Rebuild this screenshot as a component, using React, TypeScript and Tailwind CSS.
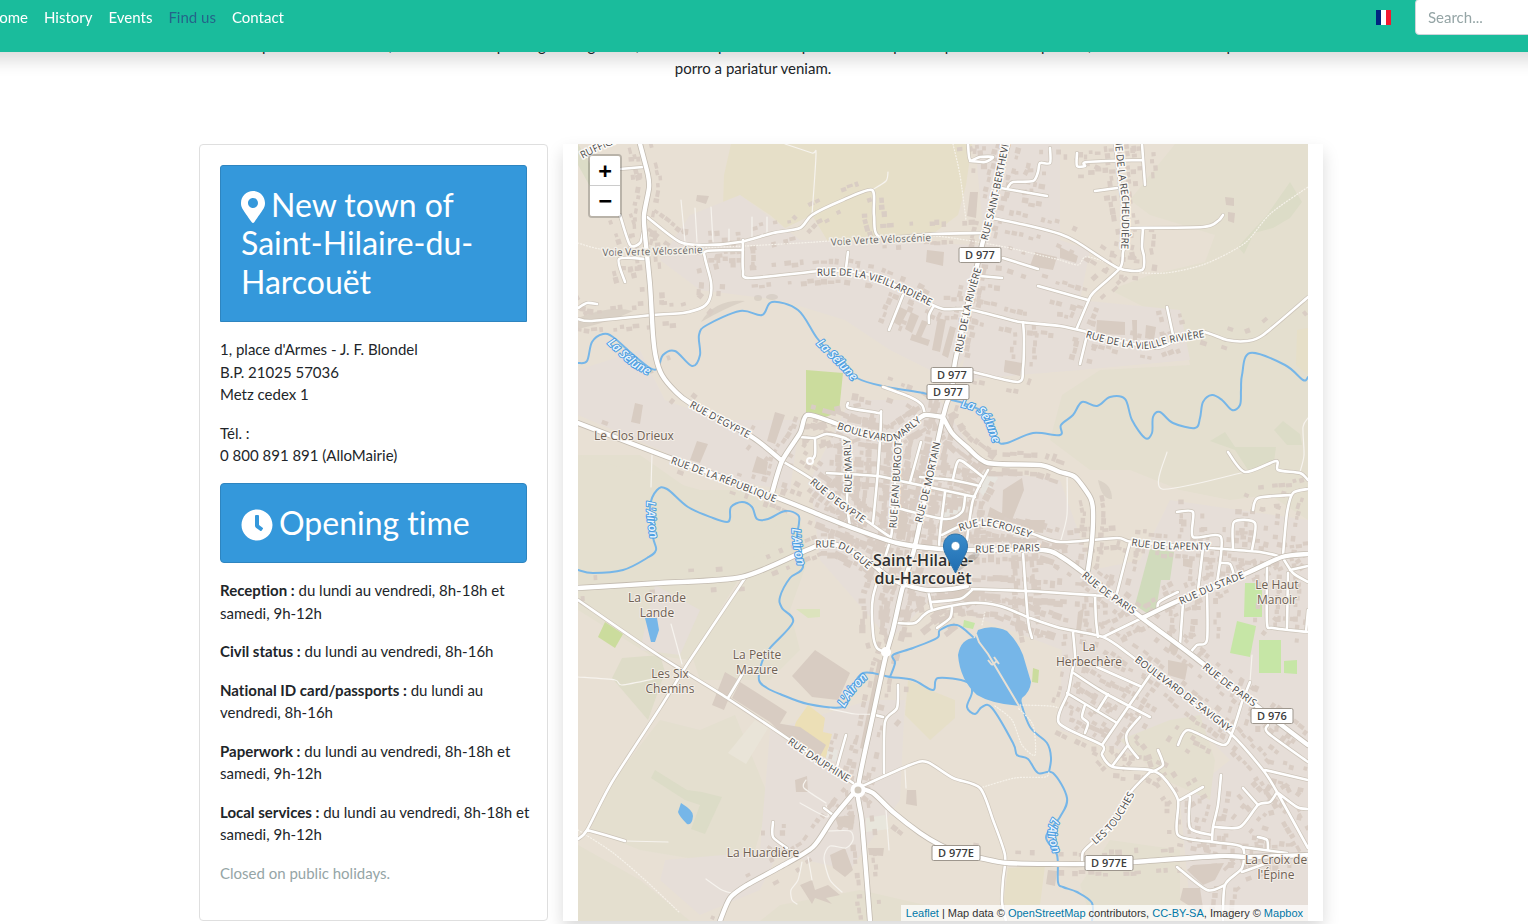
import React from "react";
import { FaClock, FaMapMarkerAlt } from "react-icons/fa";

type Kind = "major" | "minor" | "rural" | "thin" | "path";

const roads: [Kind, string][] = [
  // footpaths
  ["path", "578,243 600,249 640,252 700,248 745,246 800,243 830,241 880,238 935,236 1000,246 1060,260"],
  ["path", "1060,260 1078,265 1085,257 1100,260 1125,271 1165,273 1205,264 1245,243 1270,214 1308,187"],
  ["path", "953,144 960,175 966,220"],
  ["path", "578,830 612,852 645,880 680,913"],
  ["path", "1020,705 1050,706 1062,709"],
  ["path", "995,706 1012,720 1022,745 1035,755 1033,725 1018,708"],
  ["path", "980,788 1015,778 1045,777 1049,772"],
  ["path", "985,612 982,625"],
  // service roads
  ["thin", "681,200 685,242"],
  ["thin", "695,208 697,242"],
  ["thin", "711,207 713,242"],
  ["thin", "752,217 752,238"],
  ["thin", "767,217 767,233"],
  ["thin", "729,229 729,241"],
  ["thin", "785,144 812,153 816,154 812,215"],
  ["thin", "872,190 886,181 888,172"],
  ["thin", "652,455 651,487"],
  ["thin", "1167,452 1162,489 1245,472"],
  ["thin", "1308,418 1303,427 1304,455 1300,472"],
  ["thin", "1067,472 1067,515 1061,540"],
  ["thin", "625,841 668,842"],
  ["thin", "578,677 615,680 622,685 658,678"],
  ["thin", "671,624 682,664"],
  ["thin", "800,803 827,817 826,805"],
  ["thin", "830,709 855,714 878,714"],
  ["thin", "806,780 804,788 826,803"],
  ["thin", "828,831 850,831 853,840 846,848 830,846 824,858 830,880 842,892"],
  ["thin", "808,857 812,880"],
  ["thin", "802,862 798,880 791,890 792,900 797,904"],
  ["thin", "706,879 722,890 735,894"],
  ["thin", "886,810 889,850"],
  ["thin", "905,770 906,788"],
  ["thin", "1252,655 1250,682"],
  // rural
  ["rural", "578,600 658,655 727,698 790,740 853,783"],
  ["rural", "745,578 690,660 660,708 612,782 587,830 578,839"],
  ["rural", "587,830 605,835 625,841"],
  ["rural", "743,673 728,698"],
  ["rural", "858,788 910,765 927,762 953,778 980,788 993,820 1005,855 1003,880 1002,902 1006,921"],
  ["rural", "1130,228 1203,227 1218,221 1223,215"],
  ["rural", "1228,452 1245,472 1276,461 1278,470 1300,473 1308,480"],
  ["rural", "1150,772 1130,793 1117,822 1093,842 1083,852 1082,863"],
  ["rural", "1225,885 1207,890 1177,867"],
  // streets
  ["minor", "647,217 680,242 707,245 740,242 773,233 800,228 812,215 843,200 872,190 874,215 880,237 933,234 982,233"],
  ["minor", "743,240 743,270 750,278 820,271 845,271 870,275 900,287 927,302 943,309 967,309 1000,317 1020,322 1060,326 1087,332 1120,341 1157,348 1180,338 1203,332 1227,340 1247,341 1263,335 1308,297"],
  ["minor", "743,250 707,251 705,258 711,282 710,298 703,307 683,313 653,315 592,321 578,319"],
  ["minor", "643,167 620,169"],
  ["minor", "620,215 630,245 640,243 643,232"],
  ["minor", "625,282 619,259 645,259"],
  ["minor", "578,308 587,303 597,304"],
  ["minor", "992,218 1030,226 1060,234 1077,242 1118,268 1142,270 1144,257 1142,247 1143,228"],
  ["minor", "1115,144 1120,185 1127,235 1123,252 1120,268 1093,293 1088,302 1077,328"],
  ["minor", "1038,286 1088,300"],
  ["minor", "1142,144 1145,185"],
  ["minor", "1077,153 1077,166 1085,166 1087,162 1142,160"],
  ["minor", "1095,191 1117,188"],
  ["minor", "1087,335 1080,364"],
  ["minor", "1167,307 1173,335"],
  ["minor", "995,187 1047,196"],
  ["minor", "1008,187 1013,182 1033,181 1038,172 1040,163 1050,163 1050,148"],
  ["minor", "968,144 970,160 980,157 993,157 985,162 970,161"],
  ["minor", "1003,258 1038,269"],
  ["minor", "980,276 1002,278"],
  ["minor", "973,372 1018,382 1023,368 1024,338 1023,322"],
  ["minor", "903,295 889,330"],
  ["minor", "933,307 929,315 929,323"],
  ["minor", "848,252 846,268"],
  ["minor", "848,403 849,408 878,413 881,415 878,470 873,523"],
  ["minor", "883,387 910,397 922,405 925,415"],
  ["minor", "800,437 815,438 827,434 847,439 850,448 847,500 850,527"],
  ["minor", "815,438 815,455 810,462"],
  ["minor", "782,461 813,480 863,518 890,537"],
  ["minor", "827,473 877,476 910,483 975,497"],
  ["minor", "900,440 893,503 891,537 873,597 873,633 877,648 886,652"],
  ["minor", "921,442 910,482"],
  ["minor", "920,477 952,480 980,486"],
  ["minor", "953,479 957,463 962,461 983,477"],
  ["minor", "988,470 973,500 967,540"],
  ["minor", "945,492 940,533 939,548"],
  ["minor", "897,508 945,519 962,512 965,497"],
  ["minor", "942,535 963,525 987,523 1030,533 1060,542 1117,538 1133,542 1210,548 1260,552 1282,557"],
  ["minor", "972,589 1027,591 1060,593 1105,596"],
  ["minor", "897,623 915,623 930,611 970,603 1000,606 1030,618 1060,628 1103,637 1130,655 1180,694 1230,733 1263,770 1277,792 1308,848"],
  ["minor", "928,590 932,610"],
  ["minor", "932,602 960,599 972,590"],
  ["minor", "1023,553 1028,620 1032,638"],
  ["minor", "952,608 950,618 937,628"],
  ["minor", "1103,637 1142,618"],
  ["minor", "1130,542 1117,593"],
  ["minor", "1177,512 1193,512 1193,537 1221,537 1217,583"],
  ["minor", "1203,548 1198,590"],
  ["minor", "1233,548 1234,522 1255,523 1252,550"],
  ["minor", "1308,489 1293,493 1287,513 1283,555"],
  ["minor", "1253,510 1258,498 1290,495"],
  ["minor", "1220,563 1230,564 1234,575"],
  ["minor", "1267,567 1267,623 1273,628 1308,632"],
  ["minor", "1288,573 1287,628"],
  ["minor", "1283,558 1293,573 1308,582"],
  ["minor", "1290,570 1308,566"],
  ["minor", "1306,632 1308,610"],
  ["minor", "1158,610 1159,602 1178,592"],
  ["minor", "1183,603 1180,645"],
  ["minor", "1207,590 1207,640 1197,645 1190,653"],
  ["minor", "1095,595 1096,620 1098,637"],
  ["minor", "1073,632 1075,657 1072,672 1068,693 1059,723 1102,745 1102,755 1113,767 1150,770 1163,777 1178,800 1178,835 1213,842 1242,847 1242,868 1225,885 1223,921"],
  ["minor", "1242,702 1232,733 1223,745 1188,730 1178,745"],
  ["minor", "1250,682 1242,702"],
  ["minor", "1102,745 1150,675"],
  ["minor", "1072,672 1103,692 1150,717"],
  ["minor", "1097,667 1142,687"],
  ["minor", "1067,693 1117,723"],
  ["minor", "1098,710 1108,694"],
  ["minor", "1140,717 1127,733 1128,745 1138,758"],
  ["minor", "1113,765 1128,745"],
  ["minor", "1085,705 1082,717 1088,723 1085,733"],
  ["minor", "1158,750 1163,765 1152,772"],
  ["minor", "1203,787 1180,800"],
  ["minor", "1190,797 1190,828 1212,835"],
  ["minor", "1221,775 1218,805 1213,827 1212,842"],
  ["minor", "1215,827 1240,827 1258,805 1270,802 1277,792"],
  ["minor", "1258,805 1243,788"],
  ["minor", "1265,770 1308,780"],
  ["minor", "1277,792 1297,807 1308,809"],
  ["minor", "1268,725 1268,733 1308,762"],
  ["minor", "1242,847 1287,853"],
  ["minor", "1258,837 1267,840 1268,850"],
  ["minor", "1242,872 1270,862"],
  ["minor", "898,685 897,708 885,722 884,773"],
  ["minor", "875,715 883,717"],
  ["minor", "846,735 837,767"],
  ["minor", "773,822 773,837 787,848"],
  ["minor", "824,808 833,815"],
  // main roads
  ["major", "578,588 660,583 742,577 807,550 820,545 837,545 867,560 883,573 900,583 927,590 950,589 967,586"],
  ["major", "772,493 782,461 800,433 807,415 832,422 860,433 890,438 913,423 925,415 942,417"],
  ["major", "1142,618 1180,600 1247,573 1282,557 1308,554"],
  ["major", "943,417 952,433 967,447 988,463 1040,465 1060,472 1075,477 1090,497 1093,510 1092,540 1088,570"],
  ["major", "640,144 648,175 649,188 644,215 645,235 650,285 653,335 656,358 662,375 675,391 690,403 752,437 782,461"],
  ["major", "578,423 667,457 778,498 820,515 850,527 897,543 940,549 973,550 1043,550 1060,556 1080,570 1142,618 1193,656 1258,707 1308,745"],
  ["major", "1008,144 997,188 982,245 967,308 955,362 952,388 943,417 917,537 912,557 902,590 893,630 886,655 873,715 858,788 862,822 870,921"],
  ["major", "858,788 873,793 893,812 920,833 940,845 963,855 980,858 1007,863 1057,864 1087,864 1133,862 1220,856 1250,857 1308,855"],
  ["major", "858,788 833,818 813,847 780,867 747,885 730,898 720,921"],
];

const rivers = [
  "578,363 587,361 592,342 603,334 613,337 630,352 650,368 658,368 663,355 675,351 692,366 700,355 699,335 707,325 740,311 762,315 772,302 798,310 817,338 835,358 857,378 887,387 923,393 940,398 963,403 987,415 997,440 1007,443 1033,433 1060,435 1061,425 1073,415 1082,402 1097,406 1110,397 1125,399 1132,420 1145,438 1152,433 1153,417 1160,412 1173,423 1195,428 1200,418 1203,402 1212,395 1222,400 1232,410 1240,405 1241,390 1242,375 1250,353 1285,365 1303,380 1308,377",
  "578,570 593,573 623,570 647,558 656,550 653,537 650,507 657,490 667,489 688,507 713,518 727,522 730,518 731,507 742,502 752,507 757,519 768,519 785,511 798,515 799,523 797,540 803,567 790,578 780,597 782,608 793,622 770,648 762,662 759,680 767,688 780,694 808,704 843,707 850,693 863,673 890,677 913,680 933,690 938,678 967,682 972,692 967,707 975,714 982,707 992,708 1013,743 1017,755 1028,759 1038,773 1053,773 1067,798 1060,817 1046,837 1057,855 1058,882 1063,887 1077,892 1092,903 1092,921",
  "1020,700 1030,727 1047,743 1051,758 1049,772",
  "890,677 895,663 893,655 913,648 937,638 940,630 957,625 973,637",
];

const parse = (s: string): number[][] =>
  s
    .split(" ")
    .filter((p) => p.includes(","))
    .map((p) => p.split(",").map(Number));

// Rounds the corners of a polyline with a gentle Catmull-Rom curve.
function curve(s: string, t = 0.13): string {
  const p = parse(s);
  let d = `M${p[0][0]},${p[0][1]}`;
  for (let i = 0; i < p.length - 1; i++) {
    const a = p[i - 1] || p[i];
    const b = p[i];
    const c = p[i + 1];
    const e = p[i + 2] || c;
    d += `C${b[0] + (c[0] - a[0]) * t},${b[1] + (c[1] - a[1]) * t} ${c[0] - (e[0] - b[0]) * t},${c[1] - (e[1] - b[1]) * t} ${c[0]},${c[1]}`;
  }
  return d;
}

// Small houses lined up on both sides of the streets.
function houses(): string {
  let seed = 11;
  const rnd = () => {
    seed = (seed * 16807) % 2147483647;
    return seed / 2147483647;
  };
  let d = "";
  for (const [kind, line] of roads) {
    if (kind !== "minor" && kind !== "major") continue;
    const pts = parse(line);
    for (let i = 0; i < pts.length - 1; i++) {
      const [x1, y1] = pts[i];
      const [x2, y2] = pts[i + 1];
      const len = Math.hypot(x2 - x1, y2 - y1);
      if (len < 3) continue;
      const ux = (x2 - x1) / len;
      const uy = (y2 - y1) / len;
      for (let s = 4; s < len; s += 7) {
        for (const side of [-1, 1]) {
          const x = x1 + ux * s;
          const y = y1 + uy * s;
          const core = x > 820 && x < 1060 && y > 400 && y < 640;
          const rural =
            (x < 770 && y > 330) ||
            (x > 1175 && y < 480) ||
            (x > 880 && x < 1060 && y > 690) ||
            (x > 985 && x < 1092 && y > 440 && y < 500);
          if (rnd() > (core ? 0.95 : rural ? 0.12 : 0.62)) continue;
          const off = side * (8 + rnd() * 4);
          const cx = x - uy * off;
          const cy = y + ux * off;
          const w = 1.8 + rnd() * (core ? 3 : 1.6);
          const h = 1.6 + rnd() * (core ? 2.4 : 1.2);
          const q = (a: number, b: number) =>
            `${(cx + ux * a - uy * b).toFixed(1)},${(cy + uy * a + ux * b).toFixed(1)}`;
          d += `M${q(-w, -h)}L${q(w, -h)}L${q(w, h)}L${q(-w, h)}Z`;
        }
      }
    }
  }
  return d;
}

const houseShapes = houses();

const areas: [string, string][] = [
  ["#e6dfc8", "731,144 972,144 966,185 958,215 930,236 880,238 860,250 830,245 812,215 785,228 770,215 740,195 723,208 724,175"],
  ["#e4dfcf", "1175,144 1308,144 1308,520 1270,495 1230,500 1180,490 1130,470 1090,470 1050,440 1062,395 1100,370 1190,365 1180,325 1130,300 1110,290 1150,275 1205,262 1215,235 1150,215 1130,200"],
  ["#e4dfcf", "578,455 640,455 690,490 740,490 800,520 808,560 790,610 800,650 770,680 700,680 690,650 745,580 700,500"],
  ["#e4dfcf", "578,455 700,490 780,520 740,577 690,660 650,655 578,610"],
  ["#e4dfcf", "700,730 735,715 770,800 755,850 700,860 640,850 590,830 612,782 660,720"],
  ["#e4dfcf", "578,845 640,880 690,921 578,921"],
  ["#e4dfcf", "780,905 860,890 925,905 930,921 760,921"],
  ["#e4dfcf", "1110,840 1180,850 1180,921 1092,921 1080,885"],
  ["#e6ded8", "578,370 640,350 665,400 720,420 800,420 790,490 720,480 660,450 578,415"],
  ["#e6ded8", "660,260 690,215 740,195 800,240 980,245 1000,300 950,380 890,350 845,320 780,300 700,290"],
  ["#e6ded8", "975,144 1060,144 1060,240 1090,250 1080,300 1180,310 1190,360 1080,370 960,380 985,250"],
  ["#e6ded8", "850,400 940,400 985,470 1060,480 1092,570 1140,560 1170,500 1308,520 1308,921 1190,905 1180,800 1230,760 1190,720 1150,760 1060,730 1062,650 930,600 890,640 820,560 810,480"],
  ["#e4dfcf", "1170,720 1200,715 1215,760 1210,800 1165,780 1120,740"],
  ["#e6ded8", "770,730 870,700 905,700 900,800 850,870 760,850"],
  ["#e6ded8", "665,860 780,850 760,890 700,915 660,880"],
  ["#e6ded8", "655,585 700,610 680,655 640,650"],
  ["#e6dfc8", "908,680 935,692 955,700 955,718 930,740 905,715"],
  ["#e6dfc8", "1008,868 1045,866 1040,905 1003,905"],
  ["#e6dfc8", "1297,330 1308,328 1308,375 1296,365"],
  ["#dcdcc7", "578,144 594,170 592,190 578,165"],
  ["#dcdcc7", "1238,247 1267,215 1290,182 1302,202 1290,218 1273,228 1254,233 1244,254"],
  ["#dcdcc7", "1210,441 1225,432 1235,447 1276,447 1274,462 1248,470 1235,450"],
  ["#dcdcc7", "1274,430 1283,421 1300,434 1302,445 1287,445"],
  ["#dcdcc7", "655,770 687,790 702,792 722,797 705,834 691,829 700,805 685,800 651,778"],
  ["#dedcc8", "622,658 660,655 665,672 648,720 612,678"],
  ["#d0dbbc", "1150,549 1174,552 1170,580 1161,580 1156,610 1148,614 1135,605"],
  ["#cbdc9d", "806,370 843,373 839,412 820,419 806,413"],
  ["#cbdc9d", "605,622 623,634 615,648 598,637"],
  ["#dce3bd", "796,609 820,609 820,617 808,618"],
  ["#c6e6a6", "1245,583 1262,583 1262,617 1244,617"],
  ["#c6e6a6", "1237,621 1256,626 1250,657 1230,653"],
  ["#c6e6a6", "1259,640 1281,640 1281,673 1259,673"],
  ["#c6e6a6", "1284,661 1297,660 1297,674 1284,673"],
  ["#c6e6a6", "964,620 975,623 973,629 963,627"],
  ["#cbdc9d", "1033,668 1039,670 1038,683 1032,682"],
  ["#ecdfb6", "808,705 825,718 823,732 832,734 826,758 790,740 796,722"],
  ["#e9e4d8", "755,720 768,728 746,764 728,753"],
  ["#e7e5df", "948,495 962,498 961,512 943,518"],
  ["#e7e5df", "986,470 998,478 985,498 980,492"],
  ["#e7e5df", "828,748 838,750 836,762 826,758"],
  ["#e8e6dc", "866,818 885,815 889,829 866,832"],
];

const blocks = [
  "815,650 850,673 838,700 812,697 792,676",
  "740,682 787,712 778,727 732,698",
  "770,722 800,727 826,745 818,760 785,737",
  "725,672 737,679 724,710 712,705",
  "775,412 785,415 775,444 767,441",
  "697,441 708,444 700,463 690,460",
  "757,456 768,462 766,475 752,472",
  "635,403 643,405 640,424 631,422",
  "970,192 978,192 976,218 967,216",
  "927,250 944,252 943,266 926,262",
  "1035,252 1057,257 1053,270 1030,266",
  "1097,320 1125,322 1125,335 1096,334",
  "1132,320 1133,340 1137,340 1137,320",
  "1146,325 1156,327 1154,340 1145,338",
  "1060,247 1078,256 1076,263 1060,258",
  "1005,360 1022,363 1020,376 1004,372",
  "900,307 908,311 900,326 893,322",
  "911,312 919,316 912,333 905,329",
  "922,320 928,322 920,340 915,337",
  "938,318 946,320 940,352 932,350",
  "950,326 956,328 948,358 942,355",
  "912,334 930,340 928,346 910,340",
  "1003,490 1022,478 1024,490 1012,520 1002,515",
  "990,507 1005,515 1000,530 986,522",
  "1020,520 1045,520 1043,533 1022,531",
  "940,520 963,518 960,535 942,533",
  "955,590 980,590 978,602 953,600",
  "900,512 908,514 905,540 896,538",
  "878,660 884,660 866,750 860,748",
  "1168,660 1188,664 1185,680 1168,675",
  "1193,865 1224,863 1215,880 1203,885 1187,870",
  "1183,888 1200,888 1204,915 1180,900",
  "1048,870 1057,871 1055,886 1046,884",
  "800,885 812,880 815,890 828,885 840,895 826,898 832,904 815,898 812,904",
  "830,855 845,848 853,870 845,877 833,868",
  "907,790 916,790 917,806 906,804",
  "795,780 807,776 808,792 796,792",
  "835,817 855,815 853,829 838,826",
  "868,848 884,848 883,856 869,855",
  "1225,197 1234,198 1234,206 1226,205",
  "1228,212 1235,213 1234,223 1228,221",
  "1183,558 1193,560 1192,568 1183,566",
  "697,195 709,196 706,204 696,201",
  "1078,612 1084,608 1081,630 1076,632",
  "1172,640 1180,645 1176,655 1168,650",
];

const streetLabels: [string, string][] = [
  ["RUFFIGNY", "580,160 598,151 628,138"],
  ["RUE SAINT-BERTHEVIN", "985,250 998,198 1012,128"],
  ["RUE DE LA RIVIÈRE", "961,358 971,307 983,264"],
  ["RUE DE LA RECHEUDIÈRE", "1113,126 1119,180 1122,205 1121,256"],
  ["RUE DE LA VIEILLARDIÈRE", "817,276 848,276 874,281 897,290 930,306"],
  ["RUE DE LA VIEILLE RIVIÈRE", "1084,337 1110,344 1145,349 1170,343 1206,337"],
  ["RUE D'EGYPTE", "684,404 713,420 753,441"],
  ["RUE DE LA RÉPUBLIQUE", "664,461 719,481 781,505"],
  ["BOULEVARD MARLY", "826,425 860,436 893,441 912,429 930,414"],
  ["RUE D'EGYPTE", "807,481 834,503 865,525"],
  ["RUE MARLY", "851,496 852,470 850,436"],
  ["RUE JEAN BURGOT", "896,532 899,490 902,438"],
  ["RUE DE MORTAIN", "920,530 930,490 942,436"],
  ["RUE LECROISEY", "957,532 987,526 1033,539"],
  ["RUE DE PARIS", "968,553 1047,551"],
  ["RUE DE LAPENTY", "1128,545 1160,549 1213,550"],
  ["RUE DU GUÉ", "810,548 836,548 853,557 872,573"],
  ["RUE DE PARIS", "1075,571 1104,595 1140,619"],
  ["RUE DU STADE", "1174,608 1212,591 1252,575"],
  ["BOULEVARD DE SAVIGNY", "1130,658 1178,694 1232,735"],
  ["RUE DE PARIS", "1195,662 1227,688 1261,712"],
  ["RUE DAUPHINE", "783,740 816,763 852,785"],
  ["LES TOUCHES", "1092,848 1116,825 1137,790"],
];

const pathLabels: [string, string][] = [
  ["Voie Verte Véloscénie", "598,256 650,255 707,253"],
  ["Voie Verte Véloscénie", "826,246 880,243 936,241"],
];

const riverLabels: [string, string][] = [
  ["La Sélune", "599,336 616,352 633,367 658,380"],
  ["La Sélune", "810,338 828,356 844,372 858,388"],
  ["La Sélune", "954,406 972,410 983,419 989,432 995,450"],
  ["L'Airon", "647,492 647,518 652,548"],
  ["L'Airon", "792,518 793,544 800,576"],
  ["L'Airon", "842,712 853,694 871,674"],
  ["L'Airon", "1057,810 1049,825 1049,840 1056,862"],
];

const placeLabels: [number, number, string[]][] = [
  [634, 440, ["Le Clos Drieux"]],
  [657, 602, ["La Grande", "Lande"]],
  [757, 659, ["La Petite", "Mazure"]],
  [670, 678, ["Les Six", "Chemins"]],
  [763, 857, ["La Huardière"]],
  [1089, 651, ["La", "Herbechère"]],
  [1277, 589, ["Le Haut", "Manoir"]],
  [1276, 864, ["La Croix de", "l'Épine"]],
];

const shields: [number, number, string][] = [
  [980, 255, "D 977"],
  [952, 375, "D 977"],
  [948, 392, "D 977"],
  [1272, 716, "D 976"],
  [956, 853, "D 977E"],
  [1109, 863, "D 977E"],
];

function pick(kinds: Kind[]) {
  return roads
    .filter(([k]) => kinds.includes(k))
    .map(([, p]) => curve(p))
    .join("");
}

function CurvedLabels({
  id,
  items,
  className,
  strokeWidth = 3,
}: {
  id: string;
  items: [string, string][];
  className: string;
  strokeWidth?: number;
}) {
  return (
    <g className={className} strokeWidth={strokeWidth} strokeLinejoin="round" textAnchor="middle">
      {items.map(([text, line], i) => (
        <React.Fragment key={i}>
          <path id={`${id}-${i}`} d={curve(line, 0.16)} fill="none" stroke="none" />
          <text style={{ paintOrder: "stroke" }}>
            <textPath href={`#${id}-${i}`} startOffset="50%">
              {text}
            </textPath>
          </text>
        </React.Fragment>
      ))}
    </g>
  );
}

function TownMap() {
  const local = pick(["minor", "rural"]);
  const major = pick(["major"]);
  return (
    <svg
      viewBox="578 144 730 777"
      className="block h-auto w-full bg-[#e8e0d4] font-['Open_Sans','Noto_Sans',sans-serif]"
      role="img"
      aria-label="Map of Saint-Hilaire-du-Harcouët"
    >
      <defs>
        <linearGradient id="pin" x1="0" y1="0" x2="0" y2="1">
          <stop offset="0" stopColor="#3a8ccb" />
          <stop offset="1" stopColor="#1f6cb0" />
        </linearGradient>
      </defs>
      {areas.map(([fill, points], i) => (
        <polygon key={i} fill={fill} points={points} />
      ))}
      <g fill="#cfc6bb" opacity="0.55">
        <path d="M578,318 Q610,305 633,311 Q610,322 578,329Z" />
        <path d="M701,322 Q715,299 745,301 Q725,308 701,322Z" />
        <ellipse cx="772" cy="297" rx="6" ry="3" />
        <ellipse cx="758" cy="298" rx="4" ry="3" />
        <path d="M1098,480 Q1112,484 1112,499 Q1102,500 1098,480Z" />
      </g>
      <path d={houseShapes} fill="#d9cdc4" />
      <g fill="#d8ccc2">
        {blocks.map((points, i) => (
          <polygon key={i} points={points} />
        ))}
      </g>

      <g fill="none" stroke="#76b6e8" strokeWidth="2" strokeLinecap="round">
        {rivers.map((line, i) => (
          <path key={i} d={curve(line, 0.17)} />
        ))}
      </g>
      <g fill="#76b6e8">
        <path d="M978,630 Q992,624 1007,631 Q1018,642 1023,655 L1031,682 Q1030,692 1022,698 L1020,706 Q992,704 977,695 Q960,680 958,655 Q961,638 975,638Z" />
        <path d="M645,618 L657,618 L659,630 L655,642 L651,642Z" />
        <path d="M681,803 Q694,811 693,816 Q692,826 687,824 Q679,816 678,812Z" />
      </g>
      <path d="M976,634 L979,642 L988,654 L1019,706" fill="none" stroke="#e8e0d4" strokeWidth="2" />
      <path
        d="M992,665 L997,661 M988,660 L992,665 M994,657 L999,664"
        fill="none"
        stroke="#e8e0d4"
        strokeWidth="2"
      />

      <g fill="none" strokeLinecap="round" strokeLinejoin="round">
        <path d={pick(["path"])} stroke="#f6f2ea" strokeWidth="1.2" strokeDasharray="1 2" />
        <path d={pick(["thin"])} stroke="#f6f3ee" strokeWidth="1.2" />
        <path d={local} stroke="#cdc5ba" strokeWidth="4" />
        <path d={local} stroke="#ffffff" strokeWidth="2.6" />
        <path d={major} stroke="#c3bbb0" strokeWidth="6" />
        <path d={major} stroke="#ffffff" strokeWidth="4.4" />
      </g>
      <circle cx="858" cy="790" r="5.5" fill="#d0c8bc" stroke="#ffffff" strokeWidth="4" />
      <circle cx="886" cy="652" r="5" fill="#ffffff" />
      <circle cx="810" cy="461" r="3" fill="#e6ded8" stroke="#ffffff" strokeWidth="2" />

      <CurvedLabels
        id="street"
        items={streetLabels}
        className="fill-[#474747] stroke-[#fbf9f6] text-[10px] font-medium"
      />
      <CurvedLabels
        id="way"
        items={pathLabels}
        className="fill-[#666666] stroke-[#f3efe8] text-[10px]"
      />
      <CurvedLabels
        id="river"
        items={riverLabels}
        className="fill-[#e9f3fb] stroke-[#4a9de2] text-[12px] font-semibold italic"
        strokeWidth={2}
      />

      <g
        className="fill-[#6e6054] stroke-[#f4efe8] text-[12px]"
        strokeWidth="2"
        strokeLinejoin="round"
        textAnchor="middle"
      >
        {placeLabels.map(([x, y, lines]) =>
          lines.map((text, i) => (
            <text key={text} x={x} y={y + i * 15} style={{ paintOrder: "stroke" }}>
              {text}
            </text>
          )),
        )}
      </g>

      <g
        className="fill-[#303030] stroke-[#f4efe8] text-[16px] font-semibold"
        strokeWidth="3"
        strokeLinejoin="round"
        textAnchor="middle"
      >
        <text x="923" y="566" style={{ paintOrder: "stroke" }}>
          Saint-Hilaire-
        </text>
        <text x="923" y="584" style={{ paintOrder: "stroke" }}>
          du-Harcouët
        </text>
      </g>

      <g className="text-[11px] font-semibold" textAnchor="middle">
        {shields.map(([x, y, text], i) => {
          const w = text.length > 5 ? 48 : 42;
          return (
            <g key={i}>
              <rect
                x={x - w / 2}
                y={y - 7.5}
                width={w}
                height="15"
                rx="1.5"
                fill="#ffffff"
                stroke="#9d968d"
              />
              <text x={x} y={y + 4} fill="#3c3c3c">
                {text}
              </text>
            </g>
          );
        })}
      </g>

      <path
        d="M956,573 L975,560 Q983,553 977,552 Q968,553 956,573Z"
        fill="#000000"
        opacity="0.12"
      />
      <path
        d="M955.500,534 C948.500,534 943.500,539.200 943.500,546 C943.500,549.500 944.500,552 946.300,555.500 L955.500,573 L964.700,555.500 C966.500,552 967.500,549.500 967.500,546 C967.500,539.200 962.500,534 955.500,534Z"
        fill="url(#pin)"
        stroke="#2e72a8"
      />
      <circle cx="955.500" cy="546" r="4.500" fill="#ffffff" stroke="#2f78b2" strokeWidth="0.800" />
    </svg>
  );
}

const hours: [string, string][] = [
  ["Reception :", "du lundi au vendredi, 8h-18h et samedi, 9h-12h"],
  ["Civil status :", "du lundi au vendredi, 8h-16h"],
  ["National ID card/passports :", "du lundi au vendredi, 8h-16h"],
  ["Paperwork :", "du lundi au vendredi, 8h-18h et samedi, 9h-12h"],
  ["Local services :", "du lundi au vendredi, 8h-18h et samedi, 9h-12h"],
];

const links = ["Home", "History", "Events", "Find us", "Contact"];

export default function App() {
  return (
    <div className="min-h-screen overflow-x-hidden bg-white font-[Lato,sans-serif] text-[15px] leading-normal text-[#212529] [font-variant-ligatures:no-common-ligatures]">
      <header className="sticky top-0 z-10 -mx-5 flow-root h-[52px] bg-[#1abc9c] shadow-[0_8px_16px_rgba(0,0,0,0.15)]">
        <div className="-mt-[3px] -mr-[7px] flex h-10 items-center justify-between">
          <nav className="flex">
            {links.map((name) => (
              <a
                key={name}
                href="#"
                className={name === "Find us" ? "px-2 text-[#24648a]" : "px-2 text-white"}
              >
                {name}
              </a>
            ))}
          </nav>
          <div className="flex items-center gap-6">
            <a href="#" aria-label="Français" className="flex size-[15px]">
              <span className="flex-1 bg-[#00267f]" />
              <span className="flex-1 bg-white" />
              <span className="flex-1 bg-[#f31830]" />
            </a>
            <input
              type="search"
              aria-label="Search"
              placeholder="Search..."
              className="h-9 w-[140px] rounded border border-[#ced4da] bg-white px-3 outline-none placeholder:text-[#95a5a6]"
            />
          </div>
        </div>
      </header>

      <div className="pr-[22px]">
        <main className="mx-auto -mt-[18px] max-w-[1140px]">
          <p className="px-4 text-center">
            Corporis dolor sit amet, consectetur adipisicing elit fugit nihil, error animi possimus
            culpa dolores aliquam impedit nostrum placeat, ut odio molestias expedita
            <br />
            porro a pariatur veniam.
          </p>

          <div className="mt-[65px] grid grid-cols-[349fr_760fr] gap-[15px] pl-4">
            <section className="min-w-0 rounded border border-[#dfdfdf] p-5 pb-0">
              <h2 className="mb-4 rounded-t-[3px] border border-[#2e85c0] bg-[#3498db] p-5 text-[32px] leading-[1.2] text-white">
                <FaMapMarkerAlt className="-mt-1 mr-1.5 inline h-8 w-6 align-middle" />
                New town of Saint-Hilaire-du-Harcouët
              </h2>
              <p className="mb-4">
                1, place d'Armes - J. F. Blondel
                <br />
                B.P. 21025 57036
                <br />
                Metz cedex 1
              </p>
              <p className="mb-4">
                Tél. :<br />0 800 891 891 (AlloMairie)
              </p>
              <h2 className="mb-4 rounded border border-[#2e85c0] bg-[#3498db] p-5 text-[32px] leading-[1.2] text-white">
                <FaClock className="-mt-1 mr-1.5 inline size-8 align-middle" />
                Opening time
              </h2>
              <div className="-mr-2">
                {hours.map(([name, time]) => (
                  <p key={name} className="mb-4">
                    <strong className="font-bold">{name}</strong> {time}
                  </p>
                ))}
              </div>
              <p className="mb-4 text-[#95a5a6]">Closed on public holidays.</p>
            </section>

            <section className="min-w-0 self-start bg-white px-[15px] shadow-[0_8px_16px_rgba(0,0,0,0.15)]">
              <div className="relative">
                <TownMap />
                <div className="absolute top-2.5 left-2.5 flex flex-col rounded border-2 border-black/20 bg-clip-padding font-['DejaVu_Sans_Mono',monospace] text-[22px] font-bold text-black">
                  <button
                    type="button"
                    aria-label="Zoom in"
                    className="flex size-[30px] items-center justify-center rounded-t-[2px] border-b border-[#cccccc] bg-white leading-none"
                  >
                    +
                  </button>
                  <button
                    type="button"
                    aria-label="Zoom out"
                    className="flex size-[30px] items-center justify-center rounded-b-[2px] bg-white leading-none"
                  >
                    −
                  </button>
                </div>
                <div className="absolute right-0 bottom-0 bg-white/70 px-[5px] font-['Liberation_Sans',Arial,sans-serif] text-[11px] leading-4 whitespace-nowrap text-[#333333]">
                  <a href="#" className="text-[#0078a8]">Leaflet</a> | Map data ©{" "}
                  <a href="#" className="text-[#0078a8]">OpenStreetMap</a> contributors,{" "}
                  <a href="#" className="text-[#0078a8]">CC-BY-SA</a>, Imagery ©{" "}
                  <a href="#" className="text-[#0078a8]">Mapbox</a>
                </div>
              </div>
            </section>
          </div>
        </main>
      </div>
    </div>
  );
}
